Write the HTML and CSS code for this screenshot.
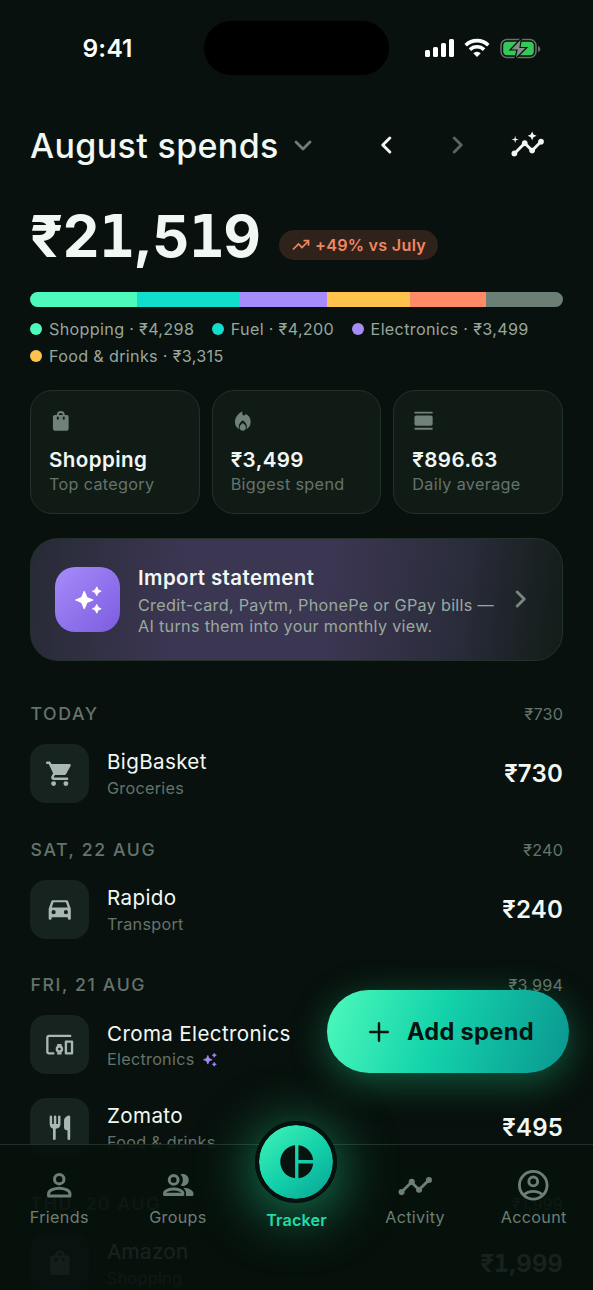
FILE: index.html
```html
<!DOCTYPE html>
<html lang="en">
<head>
<meta charset="utf-8">
<title>August spends</title>
<link rel="stylesheet" href="styles.css">
</head>
<body>
<svg width="0" height="0" class="defs">
  <symbol id="sparkles" viewBox="0 0 24 24"><path stroke="currentColor" stroke-width="1" stroke-linejoin="round" d="M9 5.2l2 4.8 4.8 2-4.8 2-2 4.8-2-4.8-4.8-2 4.8-2zM19 1.8l1 2.2 2.2 1-2.2 1-1 2.2-1-2.2-2.2-1 2.2-1zM19 15.8l1 2.2 2.2 1-2.2 1-1 2.2-1-2.2-2.2-1 2.2-1z"/></symbol>
  <symbol id="bag" viewBox="0 0 24 24"><path fill-rule="evenodd" d="M8 6a4 4 0 0 1 8 0h2a2 2 0 0 1 2 2v12a2 2 0 0 1-2 2H6a2 2 0 0 1-2-2V8a2 2 0 0 1 2-2zm2 0h4a2 2 0 0 0-4 0zM8 8v2a1 1 0 0 0 2 0V8zm6 0v2a1 1 0 0 0 2 0V8z"/></symbol>
  <symbol id="chevron" viewBox="0 0 12 18"><path d="M2.2 2l7 7-7 7" fill="none" stroke="currentColor" stroke-width="2.9" stroke-linecap="round" stroke-linejoin="round"/></symbol>
</svg>
<main class="screen">
  <header class="status">
    <span class="time">9:41</span>
    <span class="island"></span>
    <span class="signals">
      <svg width="30" height="20" viewBox="0 0 30 20"><rect x="0" y="12" width="5" height="7" rx="1.5"/><rect x="8" y="9" width="5" height="10" rx="1.5"/><rect x="16" y="5" width="5" height="14" rx="1.5"/><rect x="24" y="1" width="5" height="18" rx="1.5"/></svg>
      <svg class="wifi" width="26" height="20" viewBox="0 0 26 20"><g fill="none" stroke="currentColor" stroke-width="3.6"><path d="M1.7 7.2a16.2 16.2 0 0 1 22.6 0"/><path d="M5.9 11.6a10.2 10.2 0 0 1 14.2 0"/></g><path d="M9.3 15.2a5.3 5.3 0 0 1 7.4 0L13 19z"/></svg>
      <svg class="battery" width="41" height="22" viewBox="0 0 41 22"><rect x="1" y="1.500" width="35" height="18" rx="6" fill="none" stroke="#68706c" stroke-width="1.500"/><rect x="3.200" y="3.700" width="30.600" height="13.600" rx="4" fill="#34c759"/><path d="M38 8c3 1 3 5 0 6z" fill="#68706c"/><path d="M21.500 0L10 12h7L14.800 21.500 26.800 9.500H20z" fill="#858e88" stroke="#08110d" stroke-width="1.200"/></svg>
    </span>
  </header>

  <section class="month">
    <h1>August spends</h1>
    <svg class="down" width="18" height="11" viewBox="0 0 18 11"><path d="M2 2l7 7 7-7" fill="none" stroke="currentColor" stroke-width="2.800" stroke-linecap="round" stroke-linejoin="round"/></svg>
    <svg class="prev" width="12" height="18"><use href="#chevron"/></svg>
    <svg class="next" width="12" height="18"><use href="#chevron"/></svg>
    <svg class="insights" width="35.4" height="35.4" viewBox="0 0 24 24"><path d="M21 8c-1.450 0-2.260 1.440-1.930 2.510l-3.550 3.560c-.3-.09-.74-.09-1.040 0l-2.550-2.550C12.270 10.450 11.460 9 10 9c-1.450 0-2.270 1.440-1.930 2.520l-4.560 4.550C2.440 15.740 1 16.550 1 18a2 2 0 0 0 2 2c1.450 0 2.260-1.440 1.930-2.510l4.550-4.560c.3.09.74.09 1.040 0l2.550 2.550C12.730 16.550 13.540 18 15 18c1.450 0 2.270-1.440 1.930-2.520l3.560-3.550C21.560 12.260 23 11.450 23 10a2 2 0 0 0-2-2z"/><path d="M15 9l.94-2.070L18 6l-2.060-.93L15 3l-.94 2.070L12 6l2.060.93zM3.500 11L4 9l2-.5L4 8l-.5-2L3 8l-2 .5L3 9z"/></svg>
  </section>

  <section class="total">
    <strong class="sum">₹2<i>1</i>,5<i>1</i>9</strong>
    <span class="pill"><svg width="18" height="12" viewBox="0 0 18 12"><path d="M1 10.500l5.500-5.500 3.500 3.500L16 2.500M11.500 1.700h5v5" fill="none" stroke="currentColor" stroke-width="1.700"/></svg><span>+49% vs July</span></span>
  </section>

  <div class="split"><i class="shop"></i><i class="fuel"></i><i class="elec"></i><i class="food"></i><i class="trip"></i><i class="rest"></i></div>
  <ul class="legend">
    <li><i class="shop"></i>Shopping · ₹4,298</li>
    <li><i class="fuel"></i>Fuel · ₹4,200</li>
    <li><i class="elec"></i>Electronics · ₹3,499</li>
    <li><i class="food"></i>Food &amp; drinks · ₹3,315</li>
  </ul>

  <section class="stats">
    <article><svg width="23.600" height="23.600"><use href="#bag"/></svg><b>Shopping</b><small>Top category</small></article>
    <article><svg width="23.600" height="23.600" viewBox="0 0 24 24"><path d="M11.500 2.500v2.300c0 1.600 2 2.500 3.100 1.100l.6-.7A9 9 0 0 1 20 13.200c0 3.200-1.500 5.800-4 7.300.7-3.500-.4-6.500-4-9-3.600 2.500-4.700 5.500-4 9-2.500-1.500-4-4.100-4-7.300 0-4.700 3.200-8.700 7.500-10.700z"/><path d="M12 14.300c2.100 1.600 3.200 3 3.200 4.500a3.200 3.200 0 0 1-6.400 0c0-1.500 1.100-2.900 3.200-4.500z"/></svg><b>₹3,499</b><small>Biggest spend</small></article>
    <article><svg width="23.600" height="23.600" viewBox="0 0 24 24"><rect x="2.500" y="2.700" width="18.500" height="2" rx=".6"/><rect x="2.500" y="6.700" width="18.500" height="10.300" rx="1.800"/><rect x="2.500" y="19" width="18.500" height="2" rx=".6"/></svg><b>₹896.63</b><small>Daily average</small></article>
  </section>

  <section class="import">
    <span class="badge"><svg width="30" height="30"><use href="#sparkles"/></svg></span>
    <div class="copy"><b>Import statement</b><p>Credit-card, Paytm, PhonePe or GPay bills —<br>AI turns them into your monthly view.</p></div>
    <svg class="go" width="12" height="18"><use href="#chevron"/></svg>
  </section>

  <section class="list">
    <h2><span>TODAY</span><em>₹730</em></h2>
    <div class="row">
      <span class="tile"><svg viewBox="0 0 24 24"><path d="M7 18a2 2 0 1 0 0 4 2 2 0 0 0 0-4zm10 0a2 2 0 1 0 0 4 2 2 0 0 0 0-4zM1.800 2a1 1 0 0 0 0 2H3l3.600 7.600-1.350 2.440C4.520 15.370 5.480 17 7 17h11a1 1 0 0 0 0-2H7l1.100-2h7.450c.75 0 1.410-.41 1.750-1.030l3.580-6.490A1 1 0 0 0 20 4H5.210l-.67-1.430A1 1 0 0 0 3.640 2z"/></svg></span>
      <div><b>BigBasket</b><small>Groceries</small></div><strong>₹730</strong>
    </div>
    <h2><span>SAT, 22 AUG</span><em>₹240</em></h2>
    <div class="row">
      <span class="tile"><svg viewBox="0 0 24 24"><path fill-rule="evenodd" d="M18.920 6.010C18.720 5.420 18.160 5 17.500 5h-11c-.66 0-1.210.42-1.420 1.010L3 12v8a1 1 0 0 0 1 1 1.500 1.500 0 0 0 1.500-1.500V19h13v.5A1.500 1.500 0 0 0 20 21a1 1 0 0 0 1-1v-8zM7 16.500a1.700 1.700 0 1 1 0-3.400 1.700 1.700 0 0 1 0 3.400zm10 0a1.700 1.700 0 1 1 0-3.400 1.700 1.700 0 0 1 0 3.400zM5.500 11L7 6.700h10l1.500 4.300z"/></svg></span>
      <div><b>Rapido</b><small>Transport</small></div><strong>₹240</strong>
    </div>
    <h2><span>FRI, 21 AUG</span><em>₹3,994</em></h2>
    <div class="row">
      <span class="tile"><svg viewBox="0 0 24 24"><g fill="none" stroke="currentColor" stroke-width="1.900" stroke-linecap="round" stroke-linejoin="round"><path d="M20.500 4.800H3.200a1.300 1.300 0 0 0-1.300 1.300v11.600a1.300 1.300 0 0 0 1.300 1.300h3.600"/><path d="M17 9.500h5v9.500h-5z"/><circle cx="11.700" cy="15.500" r="2.100"/></g><path d="M9.900 11.300h3.600v2H9.900zM9.900 18h3.600v2H9.900z"/></svg></span>
      <div><b>Croma Electronics</b><small>Electronics <svg class="ai" width="15.500" height="15.500"><use href="#sparkles"/></svg></small></div>
    </div>
    <div class="row">
      <span class="tile"><svg viewBox="0 0 24 24"><path d="M15.500 6v6a2 2 0 0 0 2 2H18.300v6.900a1.100 1.100 0 0 0 2.200 0V3.100c0-.7-.6-1.200-1.300-1-2.100.6-3.700 2.300-3.700 3.900zM10.600 9H9.200V3a1 1 0 0 0-2 0v6H5.800V3a1 1 0 0 0-2 0v6a4 4 0 0 0 2.700 3.800v8.100a1.100 1.100 0 0 0 2.200 0v-8.100A4 4 0 0 0 12.600 9V3a1 1 0 0 0-2 0z"/></svg></span>
      <div><b>Zomato</b><small>Food &amp; drinks</small></div><strong>₹495</strong>
    </div>
    <h2><span>THU, 20 AUG</span><em>₹1,999</em></h2>
    <div class="row">
      <span class="tile"><svg><use href="#bag"/></svg></span>
      <div><b>Amazon</b><small>Shopping</small></div><strong>₹<i>1</i>,999</strong>
    </div>
  </section>

  <button class="fab"><svg width="20" height="20" viewBox="0 0 20 20"><path d="M10 1.200v17.600M1.200 10h17.600" stroke="currentColor" stroke-width="2.400" stroke-linecap="round"/></svg><span>Add spend</span></button>

  <nav class="tabs">
    <a><svg viewBox="0 0 24 24"><g fill="none" stroke="currentColor" stroke-width="2"><circle cx="12" cy="8" r="3.100"/><path stroke-linejoin="round" d="M5 19v-1.500c0-2.200 4-3.500 7-3.500s7 1.300 7 3.500V19z"/></g></svg><span>Friends</span></a>
    <a><svg viewBox="0 0 24 24"><g fill="none" stroke="currentColor" stroke-width="2"><circle cx="9" cy="8.500" r="2.900"/><path stroke-linejoin="round" d="M3 18v-.8c0-1.700 3.500-2.700 6-2.700s6 1 6 2.700v.8z"/></g><path d="M13.500 12.200a5.200 5.200 0 0 0 0-7.400c2.700-1 5.400.9 5.400 3.700s-2.700 4.700-5.400 3.700zM17 19c.5-1.900-.1-3.900-1.700-5.300 3.400.3 6.700 1.500 6.700 3.800V18a1 1 0 0 1-1 1z"/></svg><span>Groups</span></a>
    <a class="on"><span class="orb"><svg viewBox="0 0 24 24"><path d="M11 2v20c-5.070-.5-9-4.790-9-10s3.930-9.500 9-10zm2.030 0v8.990H22c-.47-4.740-4.240-8.520-8.970-8.990zm0 11.010V22c4.740-.47 8.500-4.250 8.970-8.990z"/></svg></span><span>Tracker</span></a>
    <a><svg viewBox="0 0 24 24"><path d="M3 16.500L9.500 10l5 5L21 8.500" fill="none" stroke="currentColor" stroke-width="1.900"/><circle cx="3" cy="16.500" r="2"/><circle cx="9.700" cy="9.800" r="2"/><circle cx="14.500" cy="15" r="2"/><circle cx="21" cy="8.500" r="2"/></svg><span>Activity</span></a>
    <a><svg viewBox="0 0 24 24"><g fill="none" stroke="currentColor" stroke-width="1.900"><circle cx="12" cy="12" r="9.100"/><circle cx="12" cy="9.500" r="2.900"/><path d="M5.800 18.300c3.300-3 9.100-3 12.400 0"/></g></svg><span>Account</span></a>
  </nav>
</main>
</body>
</html>
```
FILE: styles.css
```css
* { box-sizing: border-box; margin: 0; padding: 0; }
body { background: #08110d; }
svg { fill: currentColor; flex: none; display: block; }
.defs { position: absolute; }
i { font-style: normal; }
.screen {
  position: relative; width: 593px; height: 1290px; overflow: hidden;
  background: #08110d; color: #f1f8f4; font-family: Inter, sans-serif; font-size: 16.2px;
}

.status { display: flex; height: 96px; padding-top: 21px; color: #fff; }
.time { width: 204px; padding-left: 82.500px; line-height: 55px; font-size: 24.500px; font-weight: 600; letter-spacing: .2px; }
.island { width: 185px; height: 54px; border-radius: 27px; background: #000; }
.signals { display: flex; padding: 17px 0 0 36px; }
.wifi { margin-left: 9px; }
.battery { margin: 0 0 0 10px; }

.month { display: flex; align-items: center; height: 98px; margin-bottom: 2px; padding-left: 30px; }
.month h1 { width: 248px; padding-top: 1px; font-size: 34px; font-weight: 550; letter-spacing: .35px; line-height: 44px; white-space: nowrap; }
.down { margin-left: 15.500px; color: #6b7f75; }
.prev { margin-left: 68.500px; transform: rotate(180deg); }
.next { margin-left: 60px; color: #57655e; }
.insights { margin-left: 46px; }

.total { display: flex; align-items: flex-start; height: 96px; padding-left: 30px; }
.sum { width: 249px; padding-top: 5px; font-size: 58px; line-height: 70px; font-weight: 650; letter-spacing: -.4px; white-space: nowrap; }
.sum i { font-family: "DejaVu Sans Mono", monospace; font-weight: 700; }
.pill { display: flex; align-items: center; gap: 5px; width: 159px; height: 30px; margin-top: 34px; padding-left: 13px; border-radius: 15px; background: #2e221b; color: #f08660; font-weight: 600; white-space: nowrap; letter-spacing: .25px; }

.split { display: flex; width: 533px; height: 15px; margin-left: 30px; border-radius: 8px; overflow: hidden; }
.shop { flex: 106.5; background: #4dfabb; }
.fuel { flex: 103.500; background: #12dccb; }
.elec { flex: 87.300; background: #a78bfa; }
.food { flex: 82.400; background: #ffc24d; }
.trip { flex: 76.600; background: #ff8a66; }
.rest { flex: 76.700; background: #6b7f75; }
.legend { display: flex; flex-wrap: wrap; align-content: flex-start; column-gap: 17.500px; height: 74px; padding: 9px 30px 0; list-style: none; color: #97a69d; letter-spacing: .31px; }
.legend li { display: flex; align-items: center; gap: 7px; height: 26.500px; white-space: nowrap; }
.legend i { flex: none; width: 12px; height: 12px; border-radius: 50%; }

.stats { display: grid; grid-template-columns: repeat(3, 1fr); gap: 12px; height: 124px; margin: 9px 30px 24px; }
.stats article { padding: 18px 0 0 18px; border: 1.500px solid #22302a; border-radius: 22px; background: #111b16; white-space: nowrap; }
.stats svg { color: #6f8178; }
.stats b { display: block; margin-top: 13.400px; font-size: 20.600px; line-height: 27px; font-weight: 600; letter-spacing: .4px; }
.stats small { display: block; font-size: 16.200px; line-height: 23px; color: #64736b; letter-spacing: .33px; }

.import { display: flex; align-items: center; height: 123px; margin: 0 30px 18px; padding-left: 24px; border: 1.500px solid #22332b; border-radius: 28px; background: linear-gradient(97deg, #272a36, #3b3652 28%, #3b3652 56%, #2a2c3b 80%, #121c17); }
.badge { display: grid; place-items: center; flex: none; width: 65px; height: 65px; margin-right: 18px; border-radius: 20px; background: linear-gradient(135deg, #a78bfa, #7c5ce0); color: #fff; }
.copy { width: 377px; padding-top: 1.500px; white-space: nowrap; }
.copy b { display: block; font-size: 20.500px; line-height: 28px; font-weight: 600; letter-spacing: .38px; }
.copy p { margin-top: 3px; line-height: 21px; color: #9aa99f; letter-spacing: .3px; }
.go { margin-top: -1px; color: #78877f; }

.list { padding: 0 30px; }
.list h2 { display: flex; justify-content: space-between; height: 53px; padding: 22px 0 0 .5px; line-height: 26px; font-size: 17.700px; font-weight: 450; letter-spacing: 1.600px; color: #64736b; }
.list em { font-style: normal; font-weight: 400; font-size: 16.200px; letter-spacing: .15px; }
.row { display: flex; align-items: center; height: 82.700px; white-space: nowrap; }
.tile { display: grid; place-items: center; width: 59px; height: 59px; margin-right: 18px; border-radius: 16px; background: #17231e; color: #a9b8b0; }
.tile svg { width: 29.500px; height: 29.500px; }
.row div { padding-top: 2.600px; }
.row b { display: block; font-size: 20.600px; line-height: 26.500px; font-weight: 400; letter-spacing: .36px; }
.row small { display: flex; align-items: center; gap: 7px; font-size: 16.200px; line-height: 24px; color: #64736b; letter-spacing: .28px; }
.ai { color: #a78bfa; }
.row strong { margin-left: auto; font-size: 24px; font-weight: 600; letter-spacing: .2px; }
.row strong i { font-family: "DejaVu Sans Mono", monospace; }

.fab { position: absolute; left: 327px; top: 990px; display: flex; align-items: center; gap: 18px; width: 242px; height: 83px; padding-left: 42px; border: 0; border-radius: 42px; background: linear-gradient(108deg, #4dfabb, #14d3ab 45%, #0a9690); box-shadow: 0 9px 36px rgba(30, 190, 130, .42); color: #07130e; font: 700 23.600px Inter, sans-serif; letter-spacing: .3px; white-space: nowrap; }

.tabs { position: absolute; left: 0; right: 0; bottom: 0; display: grid; grid-template-columns: repeat(5, 1fr); height: 146px; border-top: 1.500px solid #22302a; background: rgba(8, 17, 13, .93); color: #6b7f75; letter-spacing: .3px; }
.tabs a { display: flex; flex-direction: column; align-items: center; padding-top: 22px; line-height: 24px; }
.tabs a > svg { width: 36.500px; height: 36.500px; margin-bottom: 1px; }
.tabs .on { padding: 0; margin-top: -24px; color: #1fdda8; font-weight: 600; letter-spacing: .15px; }
.orb { display: grid; place-items: center; width: 82px; height: 82px; margin-bottom: 5px; border: 4.400px solid #08110d; border-radius: 50%; background: linear-gradient(140deg, #42f5b8, #12cfa9 55%, #0aa093) padding-box; box-shadow: 0 9px 54px 4px rgba(30, 190, 130, .6); color: #07130e; }
.orb svg { width: 39.500px; height: 39.500px; }
```
